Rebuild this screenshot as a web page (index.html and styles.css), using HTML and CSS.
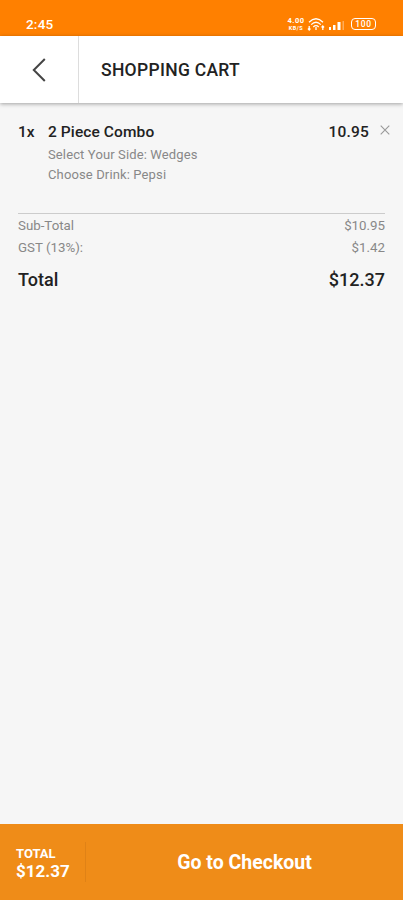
FILE: index.html
```html
<!DOCTYPE html>
<html lang="en">
  <head>
    <meta charset="utf-8">
    <title>Shopping Cart</title>
    <link rel="stylesheet" href="styles.css">
  </head>
  <body>
    <div class="app">
      <!-- status bar -->
      <div class="status">
        <span class="time">2:45</span>
        <div class="status-icons">
          <div class="speed"><span>4.00</span><span class="unit">KB/S</span></div>
          <svg class="wifi" width="18" height="15" viewBox="0 0 18 15" fill="none" stroke="#fff" stroke-width="1.3">
            <path d="M2 5.2Q9-1.6 16 5.2M4.2 7.6Q9 3 13.8 7.6M6.3 9.9Q9 7.4 11.7 9.9" />
            <path d="M9 10v3M2.2 9v4M1 11.5l1.2 1.5 1.2-1.5M15.8 13V9M14.6 10.5L15.8 9l1.2 1.5" />
          </svg>
          <svg class="signal" width="16" height="11" viewBox="0 0 16 11" fill="#fff">
            <rect x="0" y="7" width="2" height="3" />
            <rect x="4" y="5" width="2.5" height="5" />
            <rect x="8.5" y="2" width="3" height="8" />
            <rect x="13.5" y="1" width="1.5" height="9" opacity=".35" />
          </svg>
          <div class="battery">100</div>
        </div>
      </div>

      <header class="header">
        <a class="back" href="#" aria-label="Back">
          <svg width="14" height="24" viewBox="0 0 14 24" fill="none" stroke="#444" stroke-width="2">
            <path d="M12.8 1L1.8 12l11 11" />
          </svg>
        </a>
        <h1>SHOPPING CART</h1>
      </header>

      <main class="cart">
        <div class="item">
          <span class="qty">1x</span>
          <div class="info">
            <div class="name">2 Piece Combo</div>
            <div class="option">Select Your Side: Wedges</div>
            <div class="option">Choose Drink: Pepsi</div>
          </div>
          <span class="price">10.95</span>
          <a class="remove" href="#" aria-label="Remove">
            <svg width="10" height="10" viewBox="0 0 10 10" fill="none" stroke="#999" stroke-width="1.1">
              <path d="M.7.7l8.6 8.6M9.3.7L.7 9.3" />
            </svg>
          </a>
        </div>
        <div class="totals">
          <div class="row"><span>Sub-Total</span><span>$10.95</span></div>
          <div class="row"><span>GST (13%):</span><span>$1.42</span></div>
          <div class="row total"><span>Total</span><span>$12.37</span></div>
        </div>
      </main>

      <!-- checkout bar -->
      <footer class="footer">
        <div class="sum">
          <span class="sum-label">TOTAL</span>
          <span class="sum-value">$12.37</span>
        </div>
        <a class="checkout" href="#">Go to Checkout</a>
      </footer>
    </div>
  </body>
</html>
```

FILE: styles.css
```css
* {
  box-sizing: border-box;
}
body {
  margin: 0;
  font-family: Roboto, "Liberation Sans", sans-serif;
  color: #222;
  background-color: #f6f6f6;
}
a {
  text-decoration: none;
}
.app {
  display: flex;
  flex-direction: column;
  height: 900px;
}
/* status bar */
.status {
  display: flex;
  justify-content: space-between;
  height: 36px;
  padding: 12px 27px 0 26px;
  background-color: #ff8000;
  color: #fff;
}
.time {
  font-size: 13.5px;
  font-weight: 500;
  line-height: 24px;
  letter-spacing: 0.2px;
}
.status-icons {
  display: flex;
  align-items: center;
  height: 24px;
}
.speed {
  display: flex;
  flex-direction: column;
  width: 20px;
  font-size: 7.5px;
  font-weight: 700;
  line-height: 9px;
  letter-spacing: 0.5px;
  text-align: center;
}
.unit {
  font-size: 5.5px;
  line-height: 7px;
}
.wifi {
  margin-left: 1px;
}
.signal {
  margin: 2px 6px 0 4px;
}
.battery {
  width: 25px;
  height: 12px;
  border: 1px solid #fff;
  border-radius: 4px;
  font-size: 8.5px;
  font-weight: 500;
  line-height: 10px;
  letter-spacing: 0.6px;
  text-align: center;
}
/* title */
.header {
  display: flex;
  height: 67px;
  background-color: #fff;
  box-shadow: 0 1px 4px rgba(0, 0, 0, 0.35);
}
.back {
  display: flex;
  align-items: center;
  justify-content: center;
  width: 79px;
  border-right: 1px solid #ddd;
}
.header h1 {
  margin: 0 0 0 22px;
  font-size: 17.5px;
  font-weight: 500;
  line-height: 68px;
  letter-spacing: 0.3px;
}
/* cart */
.cart {
  flex: 1;
  padding: 19px 13px 0 18px;
}
.item {
  display: flex;
  height: 91px;
  font-size: 15.5px;
  font-weight: 500;
  line-height: 20px;
}
.qty {
  width: 30px;
}
.info {
  flex: 1;
}
.name {
  margin-bottom: 3px;
  letter-spacing: 0.1px;
}
.option {
  color: #888;
  font-size: 13px;
  font-weight: 400;
  letter-spacing: 0.13px;
}
.price {
  letter-spacing: 0.2px;
}
.remove {
  margin-left: 11px;
  padding-top: 3px;
  line-height: 0;
}
.totals {
  margin-right: 5px;
  padding-top: 1px;
  border-top: 1px solid #ccc;
}
.row {
  display: flex;
  justify-content: space-between;
  color: #888;
  font-size: 13.3px;
  line-height: 22px;
}
.total {
  margin-top: 8px;
  color: #222;
  font-size: 18px;
  font-weight: 500;
  line-height: 26px;
}
/* checkout bar */
.footer {
  display: flex;
  align-items: center;
  height: 76px;
  background-color: #ef8c18;
  color: #fff;
}
.sum {
  display: flex;
  flex-direction: column;
  justify-content: center;
  width: 86px;
  height: 40px;
  padding: 2px 0 0 16px;
  border-right: 1px solid #e08216;
}
.sum-label {
  font-size: 13px;
  font-weight: 700;
  line-height: 16px;
}
.sum-value {
  font-size: 17px;
  font-weight: 700;
  line-height: 18px;
}
.checkout {
  flex: 1;
  color: #fff;
  font-size: 19.5px;
  font-weight: 700;
  text-align: center;
}
```
